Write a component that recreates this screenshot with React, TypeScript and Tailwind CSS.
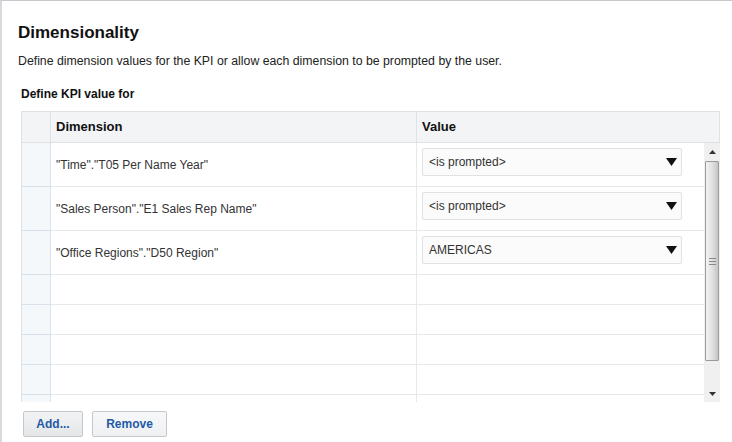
import React from "react";

const rows = [
  { dim: '"Time"."T05 Per Name Year"', value: "<is prompted>" },
  { dim: '"Sales Person"."E1 Sales Rep Name"', value: "<is prompted>" },
  { dim: '"Office Regions"."D50 Region"', value: "AMERICAS" },
];

function Caret() {
  return (
    <svg width="11" height="8" viewBox="0 0 11 8" className="shrink-0">
      <path d="M0 0 H11 L5.5 8 Z" fill="#111" />
    </svg>
  );
}

function ValueSelect({ value }: { value: string }) {
  return (
    <div className="flex h-[28px] w-[260px] items-center justify-between rounded-[2px] border border-[#dfe2e6] bg-[#fbfbfb] pl-[6px] pr-[4px] text-[12px] text-[#333]">
      <span>{value}</span>
      <Caret />
    </div>
  );
}

function Scrollbar() {
  return (
    <div className="flex w-[16px] shrink-0 flex-col bg-[#f0f0f0]">
      <div className="flex h-[18px] items-center justify-center">
        <svg width="7" height="4" viewBox="0 0 7 4">
          <path d="M0 4 L3.5 0 L7 4 Z" fill="#333" />
        </svg>
      </div>
      <div className="mx-[1px] flex h-[200px] items-center justify-center rounded-[1px] border border-[#9c9c9c] bg-gradient-to-r from-[#f3f3f3] via-[#e2e2e2] to-[#c4c4c4]">
        <div className="flex w-[7px] flex-col gap-[2px]">
          <div className="h-px bg-[#888]" />
          <div className="h-px bg-[#888]" />
          <div className="h-px bg-[#888]" />
        </div>
      </div>
      <div className="flex flex-1 items-end justify-center pb-[6px]">
        <svg width="7" height="4" viewBox="0 0 7 4">
          <path d="M0 0 L7 0 L3.5 4 Z" fill="#333" />
        </svg>
      </div>
    </div>
  );
}

export default function App() {
  return (
    <div className="h-[442px] w-[732px] overflow-hidden border-l-2 border-t border-l-[#d6d9dd] border-t-[#c6c9cc] bg-white font-['Liberation_Sans',Arial,sans-serif] text-[#222]">
      <div className="pl-[16px] pt-[22px]">
        <h1 className="text-[17px] font-bold leading-[20px] text-[#111]">
          Dimensionality
        </h1>
        <p className="mt-[11px] text-[12.3px] leading-[14px] text-[#222]">
          Define dimension values for the KPI or allow each dimension to be
          prompted by the user.
        </p>
      </div>

      <div className="pl-[19px] pt-[19px]">
        <div className="text-[12px] font-bold leading-[14px] text-[#111]">
          Define KPI value for
        </div>

        <div className="mt-[10px] w-[699px]">
          <div className="flex h-[32px] border border-[#dde2e7] bg-[#f2f4f6] text-[13px] font-bold text-[#111]">
            <div className="w-[29px] border-r border-[#dde2e7]" />
            <div className="flex w-[366px] items-center border-r border-[#dde2e7] pl-[5px]">
              Dimension
            </div>
            <div className="flex flex-1 items-center pl-[5px]">Value</div>
          </div>

          <div className="flex h-[259px] overflow-hidden border-l border-[#dde2e7]">
            <div className="flex-1">
              {rows.map((r) => (
                <div key={r.dim} className="flex h-[44px]">
                  <div className="w-[29px] border-r border-b border-[#d9e2eb] bg-[#f5f8fb]" />
                  <div className="flex w-[366px] items-center border-r border-b border-[#e6e8ea] pl-[5px] text-[12px] text-[#333]">
                    {r.dim}
                  </div>
                  <div className="flex flex-1 items-start border-b border-[#e6e8ea] pl-[5px] pt-[5px]">
                    <ValueSelect value={r.value} />
                  </div>
                </div>
              ))}
              {[0, 1, 2, 3, 4].map((i) => (
                <div key={i} className="flex h-[30px]">
                  <div className="w-[29px] border-r border-b border-[#d9e2eb] bg-[#f5f8fb]" />
                  <div className="w-[366px] border-r border-b border-[#e6e8ea]" />
                  <div className="flex-1 border-b border-[#e6e8ea]" />
                </div>
              ))}
            </div>
            <Scrollbar />
          </div>
        </div>

        <div className="mt-[9px] flex gap-[9px] pl-[2px]">
          <button className="h-[26px] w-[60px] rounded-[2px] border border-[#c4c8cc] bg-gradient-to-b from-[#f2f3f4] to-[#e4e6e8] text-[12px] font-bold text-[#1f5aa6]">
            Add...
          </button>
          <button className="h-[26px] w-[75px] rounded-[2px] border border-[#c4c8cc] bg-gradient-to-b from-[#f7f8f9] to-[#eef0f2] text-[12px] font-bold text-[#1f5aa6]">
            Remove
          </button>
        </div>
      </div>
    </div>
  );
}
